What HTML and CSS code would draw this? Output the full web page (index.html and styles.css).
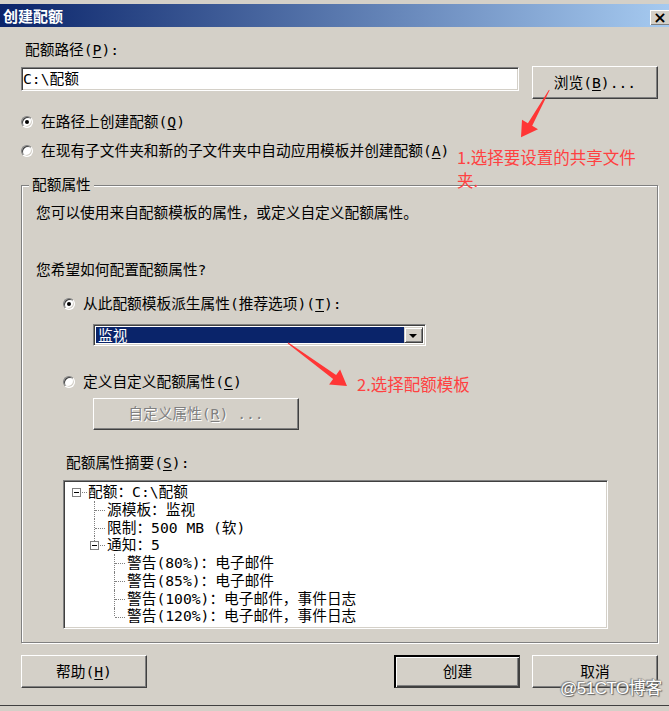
FILE: index.html
```html
<!DOCTYPE html>
<html lang="zh-CN">
<head>
  <meta charset="UTF-8" />
  <title>创建配额</title>
  <meta name="viewport" content="width=device-width, initial-scale=1.0" />
  <link rel="stylesheet" href="styles.css">
</head>
<body>
  <div class="window">
    <div class="titlebar">
      <span class="title">创建配额</span>
      <span class="close-btn">×</span>
    </div>

    <div class="dialog">
      <div class="field-label">配额路径(<u>P</u>):</div>
      <div class="path-row">
        <div class="textbox">C:\配额</div>
        <div class="btn browse-btn">浏览(<u>B</u>)...</div>
      </div>

      <div class="radio-row opt-path"><span class="radio checked"></span><span>在路径上创建配额(<u>Q</u>)</span></div>
      <div class="radio-row opt-auto"><span class="radio"></span><span>在现有子文件夹和新的子文件夹中自动应用模板并创建配额(<u>A</u>)</span></div>

      <!-- 配额属性 -->
      <fieldset class="group">
        <legend>配额属性</legend>
        <p class="intro">您可以使用来自配额模板的属性，或定义自定义配额属性。</p>
        <p class="question">您希望如何配置配额属性?</p>

        <div class="radio-row opt-template"><span class="radio checked"></span><span>从此配额模板派生属性(推荐选项)(<u>T</u>):</span></div>
        <div class="combo">
          <span class="combo-value">监视</span>
          <span class="combo-arrow"></span>
        </div>

        <div class="radio-row opt-custom"><span class="radio"></span><span>定义自定义配额属性(<u>C</u>)</span></div>
        <div class="btn custom-btn disabled">自定义属性(<u>R</u>) ...</div>

        <div class="summary-label">配额属性摘要(<u>S</u>):</div>
        <div class="tree">
          <div class="node root"><span class="twig"><span class="toggle"></span></span>配额：C:\配额</div>
          <div class="node lvl2"><span class="twig"></span>源模板：监视</div>
          <div class="node lvl2"><span class="twig"></span>限制：500 MB (软)</div>
          <div class="node lvl2"><span class="twig end"><span class="toggle"></span></span>通知：5</div>
          <div class="node lvl3"><span class="twig"></span>警告(80%)：电子邮件</div>
          <div class="node lvl3"><span class="twig"></span>警告(85%)：电子邮件</div>
          <div class="node lvl3"><span class="twig"></span>警告(100%)：电子邮件，事件日志</div>
          <div class="node lvl3"><span class="twig end"></span>警告(120%)：电子邮件，事件日志</div>
        </div>
      </fieldset>

      <div class="footer">
        <div class="btn">帮助(<u>H</u>)</div>
        <div class="footer-right">
          <div class="btn default-btn">创建</div>
          <div class="btn">取消</div>
        </div>
      </div>
    </div>
  </div>

  <!-- screenshot annotations -->
  <svg class="arrows" width="669" height="711" viewBox="0 0 669 711">
    <polygon points="549.6,90.2 532.2,125.8 538,129.3 521,137.3 522,119.7 527.9,123.2 549,89.8" />
    <polygon points="287.7,343.4 333.1,378.9 329.1,384.4 347,386 340.1,369.4 336.1,374.9 288.3,342.6" />
  </svg>
  <div class="note note-one">1.选择要设置的共享文件<br>夹.</div>
  <div class="note note-two">2.选择配额模板</div>
  <div class="watermark">@51CTO博客</div>
</body>
</html>
```

FILE: styles.css
```css
:root {
  --face: #D4D0C8;
  --shadow: #808080;
  --dark: #404040;
  --light: #FFFFFF;
  --select: #0A246A;
  --note: #FF4141;
}

body {
  margin: 0;
  background: var(--face);
  font-family: "DejaVu Sans Mono", "Noto Sans CJK SC", monospace;
  font-size: 14.7px;
  line-height: 18px;
  color: #000;
  position: relative;
  width: 669px;
  height: 711px;
  overflow: hidden;
}

u {
  text-decoration: underline;
  text-underline-offset: 2px;
}

.window {
  border-top: 4px solid var(--face);
  box-shadow: inset 0 3px 0 var(--light);
  border-bottom: 1px solid var(--dark);
}

.titlebar {
  height: 23px;
  display: flex;
  justify-content: space-between;
  align-items: flex-start;
  background: linear-gradient(to right, #0A246A, #A6CAF0);
}

.title {
  font-family: "Noto Sans CJK SC", sans-serif;
  font-weight: bold;
  font-size: 15px;
  line-height: 23px;
  color: #fff;
  padding-left: 3px;
}

.close-btn {
  margin-top: 6px;
  width: 19px;
  height: 15px;
  box-sizing: border-box;
  background: var(--face);
  border-top: 1px solid var(--light);
  border-left: 1px solid var(--light);
  box-shadow: inset 0 -1px 0 var(--shadow);
  font-family: "DejaVu Sans", sans-serif;
  font-weight: bold;
  font-size: 16px;
  line-height: 13px;
  text-align: center;
}

.dialog {
  padding: 14px 11px 17px 21px;
}

.field-label {
  padding-left: 4px;
}

.path-row {
  display: flex;
  align-items: flex-start;
  gap: 13px;
  margin-top: 7px;
}

.textbox, .combo, .tree {
  box-sizing: border-box;
  background: #fff;
  border: 1px solid;
  border-color: var(--shadow) var(--light) var(--light) var(--shadow);
  box-shadow: inset 1px 1px 0 var(--dark), inset -1px -1px 0 var(--face);
}

.textbox {
  width: 498px;
  height: 24px;
  margin-top: 1px;
  padding-left: 1px;
  line-height: 22px;
}

.btn {
  box-sizing: border-box;
  width: 126px;
  height: 33px;
  line-height: 31px;
  text-align: center;
  background: var(--face);
  border: 1px solid;
  border-color: var(--light) var(--dark) var(--dark) var(--light);
  box-shadow: inset -1px -1px 0 var(--shadow);
}

.btn.disabled {
  color: var(--shadow);
  text-shadow: 1px 1px 0 var(--light);
}

.default-btn {
  border-width: 2px 1px 1px 2px;
  border-color: #000 var(--dark) var(--dark) #000;
  box-shadow: inset 1px 1px 0 var(--light), inset -1px -1px 0 var(--dark), inset -2px -2px 0 var(--shadow);
  line-height: 29px;
}

.radio-row {
  display: flex;
  align-items: center;
  gap: 8px;
  height: 18px;
}

.radio {
  flex: none;
  position: relative;
  width: 12px;
  height: 12px;
  box-sizing: border-box;
  border-radius: 50%;
  background: #fff;
  border: 1px solid;
  border-color: var(--shadow) var(--light) var(--light) var(--shadow);
  box-shadow: inset 1px 1px 0 var(--dark), inset -1px -1px 0 var(--face);
}

.radio.checked::after {
  content: "";
  position: absolute;
  left: 3px;
  top: 3px;
  width: 4px;
  height: 4px;
  border-radius: 50%;
  background: #000;
}

.opt-path {
  margin-top: 14px;
}

.opt-auto {
  margin-top: 11px;
}

.group {
  margin: 16px 0 0;
  padding: 0 0 13px 0;
  min-width: 0;
  border: 1px solid var(--shadow);
  box-shadow: 1px 1px 0 var(--light), inset 1px 1px 0 var(--light);
}

.group legend {
  margin-left: 7px;
  padding: 0 3px;
  line-height: 18px;
  background: var(--face);
}

.group p {
  margin: 0;
  padding-left: 14px;
}

.intro {
  margin-top: 10px !important;
}

.question {
  margin-top: 39px !important;
}

.opt-template {
  margin-top: 16px;
  padding-left: 41px;
}

.combo {
  display: flex;
  width: 333px;
  height: 22px;
  margin: 11px 0 0 71px;
  padding: 2px;
}

.combo-value {
  flex: 1;
  background: var(--select);
  color: #fff;
  line-height: 18px;
  padding-left: 2px;
}

.combo-arrow {
  flex: none;
  position: relative;
  width: 19px;
  box-sizing: border-box;
  background: var(--face);
  border: 1px solid;
  border-color: var(--face) var(--dark) var(--dark) var(--face);
  box-shadow: inset 1px 1px 0 var(--light), inset -1px -1px 0 var(--shadow);
}

.combo-arrow::after {
  content: "";
  position: absolute;
  left: 4px;
  top: 6px;
  border-left: 4px solid transparent;
  border-right: 4px solid transparent;
  border-top: 4px solid #000;
}

.opt-custom {
  margin-top: 27px;
  padding-left: 41px;
}

.custom-btn {
  width: 206px;
  height: 32px;
  line-height: 30px;
  margin: 7px 0 0 71px;
}

.summary-label {
  margin-top: 24px;
  padding-left: 44px;
}

.tree {
  width: 545px;
  height: 149px;
  margin: 8px 0 0 41px;
  padding-top: 2px;
}

.node {
  display: flex;
  align-items: center;
  height: 17.8px;
  white-space: nowrap;
}

.root { padding-left: 12px; }
.lvl2 { padding-left: 30px; }
.lvl3 { padding-left: 50px; }

.twig {
  flex: none;
  position: relative;
  align-self: stretch;
  width: 13px;
}

.root .twig {
  width: 12px;
}

.twig::before {
  content: "";
  position: absolute;
  left: 0;
  top: 0;
  bottom: 0;
  border-left: 1px dotted var(--shadow);
}

.twig.end::before {
  bottom: 9px;
}

.root .twig::before {
  display: none;
}

.twig::after {
  content: "";
  position: absolute;
  left: 1px;
  top: 9px;
  width: 10px;
  border-top: 1px dotted var(--shadow);
}

.toggle {
  position: absolute;
  z-index: 1;
  left: -4px;
  top: 5px;
  width: 9px;
  height: 9px;
  box-sizing: border-box;
  border: 1px solid var(--shadow);
  background: #fff;
}

.toggle::after {
  content: "";
  position: absolute;
  left: 1px;
  top: 3px;
  width: 5px;
  height: 1px;
  background: #000;
}

.footer {
  display: flex;
  justify-content: space-between;
  margin-top: 12px;
}

.footer-right {
  display: flex;
  gap: 12px;
}

.arrows {
  position: absolute;
  left: 0;
  top: 0;
  pointer-events: none;
}

.arrows polygon {
  fill: #FF3636;
}

.note {
  position: absolute;
  font-family: "Noto Sans CJK SC", sans-serif;
  font-size: 16.5px;
  line-height: 23px;
  color: var(--note);
}

.note-one {
  left: 457px;
  top: 146px;
}

.note-two {
  left: 357px;
  top: 373px;
}

.watermark {
  position: absolute;
  left: 560px;
  top: 680px;
  font-family: "Liberation Sans", "Noto Sans CJK SC", sans-serif;
  font-size: 17px;
  letter-spacing: -0.5px;
  color: #fff;
  text-shadow: 0 0 1px #666, 1px 1px 1px #666, -1px -1px 1px #888;
}
```
